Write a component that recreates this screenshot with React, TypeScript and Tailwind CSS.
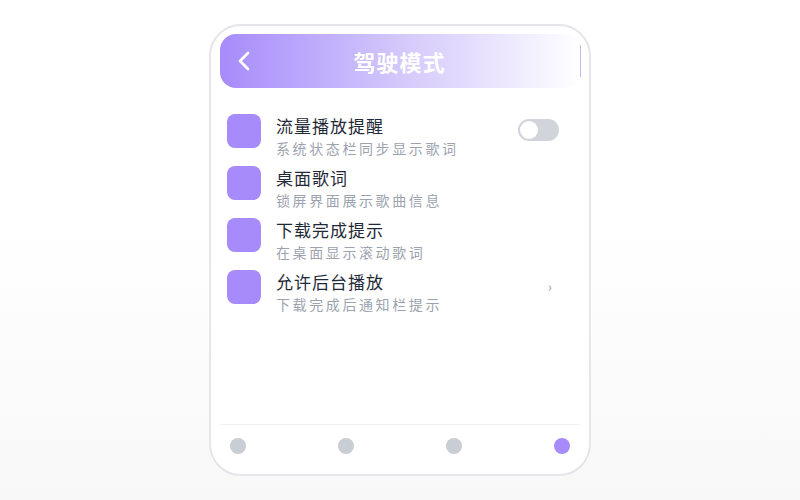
import { useState } from "react";

const items = [
  { title: "流量播放提醒", desc: "系统状态栏同步显示歌词", action: "toggle" },
  { title: "桌面歌词", desc: "锁屏界面展示歌曲信息", action: "none" },
  { title: "下载完成提示", desc: "在桌面显示滚动歌词", action: "none" },
  { title: "允许后台播放", desc: "下载完成后通知栏提示", action: "arrow" },
];

export default function App() {
  const [on, setOn] = useState(false);
  const [page, setPage] = useState(3);

  return (
    <div
      className="h-[500px] w-full flex items-center justify-center bg-gradient-to-b from-white from-45% to-[#f8f8f9]"
      style={{ fontFamily: '"Noto Sans CJK SC", "Noto Sans", sans-serif' }}
    >
      <div className="w-[382px] h-[452px] bg-white border-2 border-[#e5e5ea] rounded-[32px] p-[9px] pt-[8px] flex flex-col">
        {/* header */}
        <div className="h-[54px] -mr-[2px] flex items-center rounded-[16px] bg-gradient-to-r from-[#a78bfa] via-[#d4c8fb] to-white pl-[17px] pr-[1px]">
          <svg width="14" height="22" viewBox="0 0 14 22" fill="none">
            <path d="M11 3 L3 11 L11 19" stroke="white" strokeWidth="2.6" strokeLinecap="round" strokeLinejoin="round" />
          </svg>
          <h1 className="flex-1 text-center text-white font-bold text-[22px] tracking-[1px] pr-[32px]">驾驶模式</h1>
          <div className="w-[1px] h-[32px] bg-[#c4b5fd]" />
        </div>

        {/* list */}
        <div className="flex flex-col gap-2 mt-[26px] px-[7px]">
          {items.map((it) => (
            <div key={it.title} className="flex items-start h-[44px]">
              <div className="w-[34px] h-[34px] rounded-[8px] bg-[#a78bfa] shrink-0" />
              <div className="flex-1 ml-[15px] flex flex-col">
                <span className="text-[17px] leading-[24px] tracking-[1px] text-[#1f2937]">{it.title}</span>
                <span className="text-[14px] leading-[20px] tracking-[2.6px] text-[#9ca3af]">{it.desc}</span>
              </div>
              {it.action === "toggle" && (
                <button
                  onClick={() => setOn(!on)}
                  className={`mt-[5px] mr-[14px] w-[41px] h-[22px] rounded-full p-[2px] flex ${on ? "bg-[#a78bfa] justify-end" : "bg-[#d1d5db] justify-start"}`}
                >
                  <span className="w-[18px] h-[18px] rounded-full bg-white block" />
                </button>
              )}
              {it.action === "arrow" && (
                <span className="mt-[5px] mr-[21px] text-[14px] leading-[22px] text-[#9ca3af]">›</span>
              )}
            </div>
          ))}
        </div>

        <div className="flex-1" />

        {/* pager */}
        <div className="border-t border-[#f0f0f3] h-[41px] flex items-start justify-between px-[10px] pt-[13px]">
          {[0, 1, 2, 3].map((i) => (
            <button
              key={i}
              onClick={() => setPage(i)}
              className={`w-[16px] h-[16px] rounded-full ${page === i ? "bg-[#a78bfa]" : "bg-[#c9cdd4]"}`}
            />
          ))}
        </div>
      </div>
    </div>
  );
}
